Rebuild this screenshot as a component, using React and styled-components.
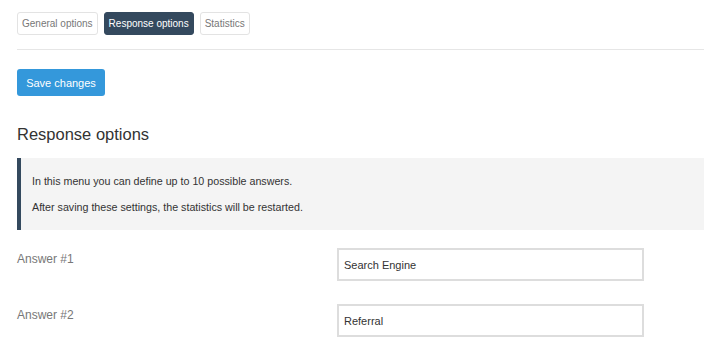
import styled, { createGlobalStyle } from "styled-components";

const GlobalStyle = createGlobalStyle`
  body {
    margin: 0;
    background: #fff;
    font-family: "Liberation Sans", Arial, sans-serif;
  }
`;

const Page = styled.div`
  padding: 12px 0 0 17px;
`;

const Tabs = styled.div`
  display: flex;
  gap: 6px;
`;

const Tab = styled.button`
  height: 23px;
  padding: 0 4px;
  font-family: inherit;
  font-size: 10px;
  border-radius: 3px;
  border: 1px solid ${(p) => (p.active ? "#34495e" : "#e3e3e3")};
  background: ${(p) => (p.active ? "#34495e" : "#fff")};
  color: ${(p) => (p.active ? "#fff" : "#777")};
`;

const Divider = styled.hr`
  border: 0;
  border-top: 1px solid #e6e6e6;
  margin: 14px 0 19px;
`;

const SaveButton = styled.button`
  height: 27px;
  width: 88px;
  font-family: inherit;
  font-size: 11px;
  color: #fff;
  background: #3498db;
  border: 0;
  border-radius: 3px;
`;

const Heading = styled.h2`
  margin: 28px 0 0;
  font-size: 16.5px;
  font-weight: 400;
  color: #333;
  line-height: 20px;
`;

const Notice = styled.div`
  margin-top: 14px;
  background: #f4f4f4;
  border-left: 4px solid #34495e;
  padding: 17px 11px 16px;
  font-size: 10.7px;
  color: #333;
  display: flex;
  flex-direction: column;
  gap: 13px;
  line-height: 13px;
`;

const Rows = styled.div`
  margin-top: 18px;
  display: flex;
  flex-direction: column;
  gap: 23px;
`;

const Row = styled.div`
  display: grid;
  grid-template-columns: 320px 307px;
  align-items: start;
`;

const Label = styled.label`
  font-size: 12px;
  color: #777;
  padding-top: 4px;
`;

const Input = styled.input`
  box-sizing: border-box;
  height: 33px;
  width: 307px;
  border: 2px solid #ddd;
  padding: 0 5px;
  font-family: inherit;
  font-size: 11px;
  color: #333;
`;

export default function App() {
  const answers = ["Search Engine", "Referral"];
  return (
    <>
      <GlobalStyle />
      <Page>
        <Tabs>
          <Tab>General options</Tab>
          <Tab active>Response options</Tab>
          <Tab>Statistics</Tab>
        </Tabs>
        <Divider />
        <SaveButton>Save changes</SaveButton>
        <Heading>Response options</Heading>
        <Notice>
          <div>In this menu you can define up to 10 possible answers.</div>
          <div>After saving these settings, the statistics will be restarted.</div>
        </Notice>
        <Rows>
          {answers.map((a, i) => (
            <Row key={i}>
              <Label>Answer #{i + 1}</Label>
              <Input defaultValue={a} />
            </Row>
          ))}
        </Rows>
      </Page>
    </>
  );
}
